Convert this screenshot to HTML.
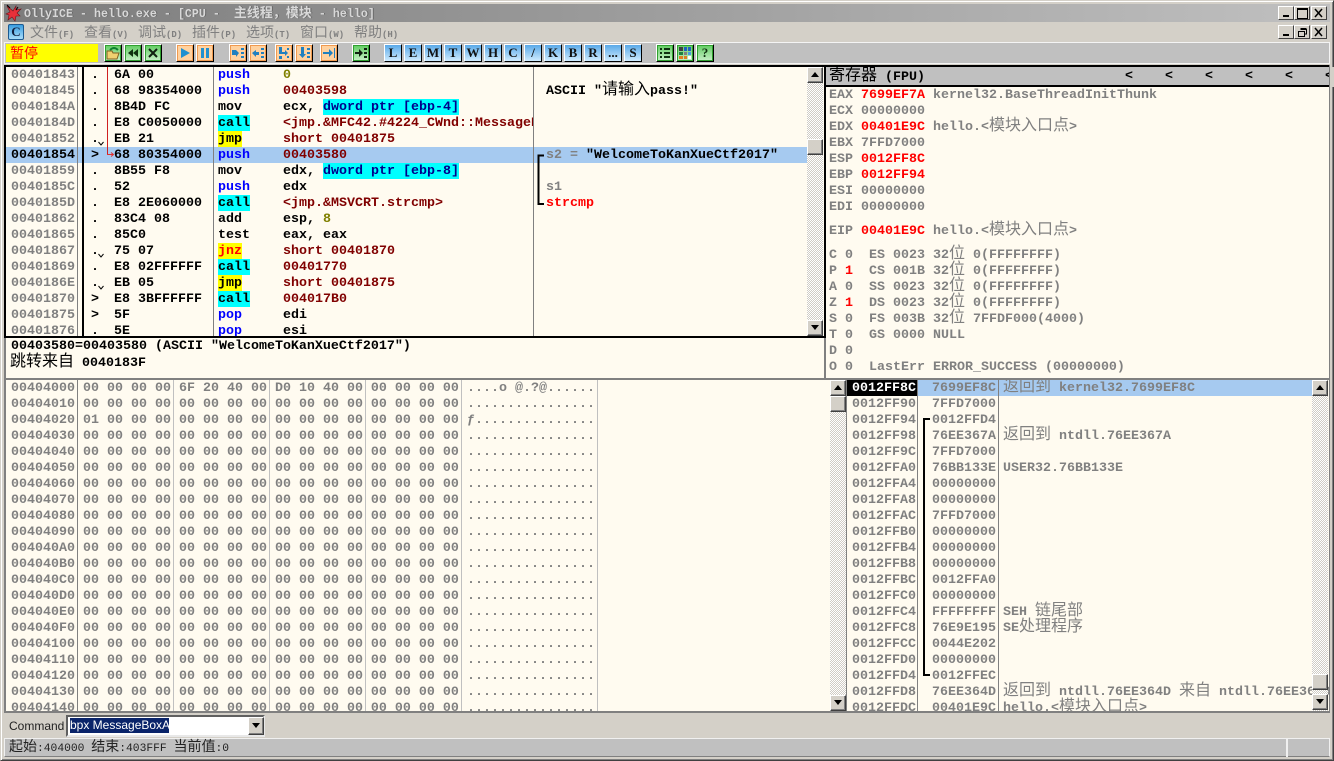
<!DOCTYPE html>
<html><head><meta charset="utf-8"><style>
html,body{margin:0;padding:0;width:1334px;height:761px;overflow:hidden;background:#d4d0c8}
div,pre,svg{position:absolute;margin:0}
pre{font:700 13.33px/16px "Liberation Mono",monospace;color:#808080;white-space:pre}
.c{font:400 16px/0 "Noto Sans CJK SC",sans-serif}
.k{color:#000}.b{color:#00f}.m{color:#800000}.o{color:#808000}.r{color:#f00}
.cy{background:#0ff;display:inline-block;height:15px;box-shadow:0 -1px 0 #0ff}.ye{background:#ff0;display:inline-block;height:15px;box-shadow:0 -1px 0 #ff0}
.p{background:#fffbf0;overflow:hidden}
.sb{width:16px;height:16px;background:#d4d0c8;box-sizing:border-box;border:1px solid;border-color:#fff #404040 #404040 #fff;box-shadow:inset -1px -1px #808080}
.tr{width:16px;background-color:#f2efe8;background-image:conic-gradient(#d0ccc4 25%,#fff 0 50%,#d0ccc4 0 75%,#fff 0);background-size:2px 2px}
.v{width:1px}
.w{width:16px;height:14px;background:#d4d0c8;box-sizing:border-box;border:1px solid;border-color:#fff #404040 #404040 #fff;color:#000}
.tb{top:44px;width:18px;height:18px;box-sizing:border-box;border:1px solid;border-color:#fff #000 #000 #fff;font:700 13px/16px "Liberation Serif",serif;text-align:center;color:#111;overflow:hidden}
.bl{background:linear-gradient(#5aa9e8,#d0ecff)}
.or{background:#ffd2a0;box-shadow:inset 0 0 0 1px #f09a50}
.gr{background:linear-gradient(#60cc60,#c8f0c8);box-shadow:inset 0 0 0 1px #30a030}
.tb svg{left:0;top:0}
.mn{top:22px;font:400 14px/20px "Noto Sans CJK SC",sans-serif;color:#808080;white-space:pre}
.mn span{font:700 9px "Liberation Mono",monospace}
</style></head><body>

<div style="left:0;top:0;width:1334px;height:761px;box-sizing:border-box;border:1px solid;border-color:#d4d0c8 #404040 #404040 #d4d0c8;box-shadow:inset 1px 1px #fff,inset -1px -1px #808080"></div>

<!-- title bar -->
<div style="left:4px;top:4px;width:1326px;height:18px;background:linear-gradient(90deg,#7c7c7c,#c0c0c0)"></div>
<svg style="left:5px;top:4px" width="18" height="18" viewBox="0 0 18 18"><path d="M2 2L8 7L11 2L11 6L16 5L12 9L15 12L11 12L10 17L7 13L3 16L4 11L1 10L5 8Z" fill="#e8303a" stroke="#701018" stroke-width=".6"/><path d="M2 1L5 4M13 3L11 6" stroke="#000"/></svg>
<pre style="left:24px;top:6px;color:#d8d8d8;font-size:11.67px;text-shadow:1px 0 #666">OllyICE - hello.exe - [CPU -  <span class="c" style="font-weight:700;font-size:13px">主线程，模块</span> - hello]</pre>
<div class="w" style="left:1278px;top:6px"><div style="left:4px;top:8px;width:6px;height:2px;background:#000"></div></div>
<div class="w" style="left:1294px;top:6px"><div style="left:2px;top:1px;width:9px;height:8px;border:1px solid #000;border-top-width:2px;box-sizing:content-box"></div></div>
<div class="w" style="left:1311px;top:6px"><svg style="left:2px;top:1px" width="10" height="10"><path d="M1 1L8 9M8 1L1 9" stroke="#000" stroke-width="1.5"/></svg></div>

<!-- menu -->
<div style="left:8px;top:24px;width:16px;height:16px;background:linear-gradient(#3a9ee0,#a8dcfa);border:1px solid #1c5a90;box-sizing:border-box;border-radius:2px;font:700 13px/14px 'Liberation Serif',serif;color:#102040;text-align:center">C</div>
<div class="mn" style="left:30px">文件<span>(F)</span></div>
<div class="mn" style="left:84px">查看<span>(V)</span></div>
<div class="mn" style="left:138px">调试<span>(D)</span></div>
<div class="mn" style="left:192px">插件<span>(P)</span></div>
<div class="mn" style="left:246px">选项<span>(T)</span></div>
<div class="mn" style="left:300px">窗口<span>(W)</span></div>
<div class="mn" style="left:354px">帮助<span>(H)</span></div>
<div class="w" style="left:1278px;top:25px"><div style="left:4px;top:8px;width:6px;height:2px;background:#000"></div></div>
<div class="w" style="left:1294px;top:25px"><svg style="left:2px;top:1px" width="11" height="10"><path d="M3.5 2.5H9.5V7H7.5M1.5 4.5H7.5V9.5H1.5ZM3.5 1.5H9.5" fill="none" stroke="#000"/></svg></div>
<div class="w" style="left:1311px;top:25px"><svg style="left:2px;top:1px" width="10" height="10"><path d="M1 1L8 9M8 1L1 9" stroke="#000" stroke-width="1.5"/></svg></div>

<!-- toolbar -->
<div style="left:4px;top:42px;width:1326px;height:22px;box-sizing:border-box;background:#c0c0c0;border:1px solid;border-color:#f4f4f4"></div>
<div style="left:6px;top:44px;width:92px;height:18px;background:#ff0;color:#f00;font:400 14px/18px 'Noto Sans CJK SC',sans-serif;padding-left:4px;box-sizing:border-box">暂停</div>

<div class="tb gr" style="left:104px"><svg width="16" height="16"><path d="M2 6H7L8 8H14L12 14H2Z" fill="#f0d070" stroke="#806020"/><path d="M5 5Q9 1 13 5" fill="none" stroke="#108030" stroke-width="2"/></svg></div>
<div class="tb gr" style="left:124px"><svg width="16" height="16"><path d="M8 4V12L3 8ZM13 4V12L8 8Z" fill="#103010"/></svg></div>
<div class="tb gr" style="left:144px"><svg width="16" height="16"><path d="M4 4L12 12M12 4L4 12" stroke="#102010" stroke-width="2"/></svg></div>
<div class="tb or" style="left:176px"><svg width="16" height="16"><path d="M4 3L13 8L4 13Z" fill="#2090d0"/></svg></div>
<div class="tb or" style="left:196px"><svg width="16" height="16"><path d="M4 3H7V13H4ZM9 3H12V13H9Z" fill="#2090d0"/></svg></div>
<div class="tb or" style="left:229px"><svg width="16" height="16"><path d="M2 5H6L9 8L6 12V10H2Z" fill="#2080c0"/><path d="M11 3H14V5H11ZM11 7H14V9H11ZM11 11H14V13H11Z" fill="#2080c0"/></svg></div>
<div class="tb or" style="left:249px"><svg width="16" height="16"><path d="M2 8L6 5V7H9V10H6V12Z" fill="#2080c0"/><path d="M11 3H14V5H11ZM11 7H14V9H11ZM11 11H14V13H11Z" fill="#2080c0"/></svg></div>
<div class="tb or" style="left:275px"><svg width="16" height="16"><path d="M3 2H6V7L9 7V5L12 8L9 11V9H3Z" fill="#2080c0"/><path d="M3 11H6V14H3ZM11 3H13V5H11ZM11 11H13V13H11Z" fill="#2080c0"/></svg></div>
<div class="tb or" style="left:295px"><svg width="16" height="16"><path d="M5 2H8V9H10L6.500 13L3 9H5Z" fill="#2080c0"/><path d="M11 3H14V5H11ZM11 7H14V9H11ZM11 11H14V13H11Z" fill="#2080c0"/></svg></div>
<div class="tb or" style="left:320px"><svg width="16" height="16"><path d="M2 7H8V4L12 8L8 12V9H2ZM13 3H14V13H13Z" fill="#2080c0"/></svg></div>
<div class="tb gr" style="left:352px"><svg width="16" height="16"><path d="M2 7H6V4L10 8L6 12V9H2Z" fill="#102010"/><path d="M11 3H14V5H11ZM11 7H14V9H11ZM11 11H14V13H11Z" fill="#102010"/></svg></div>

<div class="tb bl" style="left:384px">L</div><div class="tb bl" style="left:404px">E</div><div class="tb bl" style="left:424px">M</div><div class="tb bl" style="left:444px">T</div><div class="tb bl" style="left:464px">W</div><div class="tb bl" style="left:484px">H</div><div class="tb bl" style="left:504px">C</div><div class="tb bl" style="left:524px">/</div><div class="tb bl" style="left:544px">K</div><div class="tb bl" style="left:564px">B</div><div class="tb bl" style="left:584px">R</div><div class="tb bl" style="left:604px">...</div><div class="tb bl" style="left:624px">S</div>
<div class="tb gr" style="left:656px"><svg width="16" height="16"><path d="M3 3H5V5H3ZM7 3H13V5H7ZM3 7H5V9H3ZM7 7H13V9H7ZM3 11H5V13H3ZM7 11H13V13H7Z" fill="#103010"/></svg></div>
<div class="tb gr" style="left:676px"><svg width="16" height="16"><path d="M2 2H6V6H2Z" fill="#404040"/><path d="M7 2H10V6H7Z" fill="#2060c0"/><path d="M11 2H14V6H11Z" fill="#2060c0"/><path d="M2 7H6V10H2Z" fill="#208040"/><path d="M7 7H10V10H7Z" fill="#808080"/><path d="M11 7H14V10H11Z" fill="#40a0e0"/><path d="M2 11H6V14H2Z" fill="#e08020"/><path d="M7 11H10V14H7Z" fill="#e08020"/><path d="M11 11H14V14H11Z" fill="#fff"/></svg></div>
<div class="tb gr" style="left:696px;color:#103010">?</div>

<!-- black frame -->
<div style="left:4px;top:65px;width:1326px;height:2px;background:#000"></div>

<!-- disassembly pane -->
<div class="p" style="left:4px;top:67px;width:820px;height:269px;border-left:2px solid #000;box-sizing:border-box">
<div style="left:0;top:80px;width:801px;height:16px;background:#a6caf0"></div>
<div class="v" style="left:71px;top:0;height:269px;background:#808080"></div>
<div style="left:76px;top:0;width:2px;height:269px;background:#000"></div>
<div class="v" style="left:207px;top:0;height:269px;background:#808080"></div>
<div class="v" style="left:527px;top:0;height:269px;background:#808080"></div>
<div class="v" style="left:101px;top:0;height:88px;background:#d02020"></div>
<svg style="left:101px;top:84px" width="8" height="8"><path d="M0 3.500H6M4 1.500L6.500 3.500L4 5.500" fill="none" stroke="#e03030"/></svg>
<pre style="left:5px;top:1px">00401843
00401845
0040184A
0040184D
00401852
<span class="k">00401854</span>
00401859
0040185C
0040185D
00401862
00401865
00401867
00401869
0040186E
00401870
00401875
00401876</pre>
<pre style="left:85px;top:1px;color:#000">.
.
.
.
.
&gt;
.
.
.
.
.
.
.
.
&gt;
&gt;
.</pre>
<svg style="left:92px;top:0" width="8" height="230"><path d="M0.500 75L3 78L5.500 75M0.500 187L3 190L5.500 187M0.500 219L3 222L5.500 219" fill="none" stroke="#000"/></svg>
<pre style="left:108px;top:1px;color:#000">6A 00
68 98354000
8B4D FC
E8 C0050000
EB 21
68 80354000
8B55 F8
52
E8 2E060000
83C4 08
85C0
75 07
E8 02FFFFFF
EB 05
E8 3BFFFFFF
5F
5E</pre>
<pre style="left:212px;top:1px;color:#000"><span class="b">push</span>
<span class="b">push</span>
mov
<span class="cy">call</span>
<span class="ye">jmp</span>
<span class="b">push</span>
mov
<span class="b">push</span>
<span class="cy">call</span>
add
test
<span class="ye r">jnz</span>
<span class="cy">call</span>
<span class="ye">jmp</span>
<span class="cy">call</span>
<span class="b">pop</span>
<span class="b">pop</span></pre>
<div style="left:277px;top:0;width:250px;height:269px;overflow:hidden"><pre style="left:0;top:1px;color:#000"><span class="o">0</span>
<span class="m">00403598</span>
ecx, <span class="cy" style="color:#00008b">dword ptr [ebp-4]</span>
<span class="m">&lt;jmp.&amp;MFC42.#4224_CWnd::MessageBox&gt;</span>
<span class="m">short 00401875</span>
<span class="m">00403580</span>
edx, <span class="cy" style="color:#00008b">dword ptr [ebp-8]</span>
edx
<span class="m">&lt;jmp.&amp;MSVCRT.strcmp&gt;</span>
esp, <span class="o">8</span>
eax, eax
<span class="m">short 00401870</span>
<span class="m">00401770</span>
<span class="m">short 00401875</span>
<span class="m">004017B0</span>
edi
esi</pre></div>
<pre style="left:540px;top:17px;color:#000">ASCII "<span class="c">请输入</span>pass!"</pre>
<svg style="left:531px;top:80px" width="10" height="62"><path d="M7 8.500H1.500V57H7" fill="none" stroke="#000" stroke-width="2"/></svg>
<pre style="left:540px;top:81px">s2 = <span class="k">"WelcomeToKanXueCtf2017"</span>
 
s1
<span class="r">strcmp</span></pre>
</div>
<!-- disasm scroll -->
<div class="tr" style="left:807px;top:67px;height:269px"></div>
<div class="sb" style="left:807px;top:67px"><svg style="left:3px;top:4px" width="9" height="6"><path d="M4 0L8 5H0Z" fill="#000"/></svg></div>
<div class="sb" style="left:807px;top:139px"></div>
<div class="sb" style="left:807px;top:320px"><svg style="left:3px;top:4px" width="9" height="6"><path d="M0 0H8L4 5Z" fill="#000"/></svg></div>
<div style="left:4px;top:336px;width:820px;height:2px;background:#000"></div>

<!-- info pane -->
<div class="p" style="left:4px;top:338px;width:820px;height:40px;border-left:2px solid #808080;box-sizing:border-box">
<pre style="left:5px;top:1px;color:#000">00403580=00403580 (ASCII "WelcomeToKanXueCtf2017")</pre>
<pre style="left:5px;top:18px;color:#000"><span class="c" style="margin-left:-1px">跳转来自</span> 0040183F</pre>
</div>

<!-- registers -->
<div style="left:824px;top:67px;width:2px;height:271px;background:#000"></div>
<div style="left:824px;top:338px;width:2px;height:40px;background:#808080"></div>
<div style="left:826px;top:67px;width:503px;height:20px;background:#c0c0c0;border-bottom:2px solid #000;box-sizing:border-box"></div>
<pre style="left:829px;top:70px;color:#000"><span class="c">寄存器</span> (FPU)</pre>
<pre style="left:1125px;top:69px;color:#000">&lt;    &lt;    &lt;    &lt;    &lt;    &lt;</pre>
<div style="left:1329px;top:67px;width:5px;height:20px;background:#d4d0c8"></div>
<div class="p" style="left:826px;top:87px;width:503px;height:291px">
<pre style="left:3px;top:1px">EAX <span class="r">7699EF7A</span> kernel32.BaseThreadInitThunk
ECX 00000000
EDX <span class="r">00401E9C</span> hello.&lt;<span class="c">模块入口点</span>&gt;
EBX 7FFD7000
ESP <span class="r">0012FF8C</span>
EBP <span class="r">0012FF94</span>
ESI 00000000
EDI 00000000</pre>
<pre style="left:3px;top:137px">EIP <span class="r">00401E9C</span> hello.&lt;<span class="c">模块入口点</span>&gt;</pre>
<pre style="left:3px;top:161px">C 0  ES 0023 32<span class="c">位</span> 0(FFFFFFFF)
P <span class="r">1</span>  CS 001B 32<span class="c">位</span> 0(FFFFFFFF)
A 0  SS 0023 32<span class="c">位</span> 0(FFFFFFFF)
Z <span class="r">1</span>  DS 0023 32<span class="c">位</span> 0(FFFFFFFF)
S 0  FS 003B 32<span class="c">位</span> 7FFDF000(4000)
T 0  GS 0000 NULL
D 0
O 0  LastErr ERROR_SUCCESS (00000000)</pre>
</div>
<div style="left:1329px;top:65px;width:1px;height:646px;background:#808080"></div>

<!-- divider -->
<div style="left:4px;top:378px;width:1326px;height:2px;background:#808080"></div>
<div style="left:4px;top:380px;width:2px;height:332px;background:#808080"></div>

<!-- dump -->
<div class="p" style="left:6px;top:380px;width:824px;height:331px">
<div class="v" style="left:71px;top:0;height:331px;background:#808080"></div>
<div class="v" style="left:167px;top:0;height:331px;background:#c0c0c0"></div>
<div class="v" style="left:263px;top:0;height:331px;background:#c0c0c0"></div>
<div class="v" style="left:359px;top:0;height:331px;background:#c0c0c0"></div>
<div class="v" style="left:455px;top:0;height:331px;background:#c0c0c0"></div>
<div class="v" style="left:591px;top:0;height:331px;background:#c0c0c0"></div>
<pre style="left:5px;top:1px">00404000
00404010
00404020
00404030
00404040
00404050
00404060
00404070
00404080
00404090
004040A0
004040B0
004040C0
004040D0
004040E0
004040F0
00404100
00404110
00404120
00404130
00404140</pre>
<pre style="left:77px;top:1px">00 00 00 00 6F 20 40 00 D0 10 40 00 00 00 00 00
00 00 00 00 00 00 00 00 00 00 00 00 00 00 00 00
01 00 00 00 00 00 00 00 00 00 00 00 00 00 00 00
00 00 00 00 00 00 00 00 00 00 00 00 00 00 00 00
00 00 00 00 00 00 00 00 00 00 00 00 00 00 00 00
00 00 00 00 00 00 00 00 00 00 00 00 00 00 00 00
00 00 00 00 00 00 00 00 00 00 00 00 00 00 00 00
00 00 00 00 00 00 00 00 00 00 00 00 00 00 00 00
00 00 00 00 00 00 00 00 00 00 00 00 00 00 00 00
00 00 00 00 00 00 00 00 00 00 00 00 00 00 00 00
00 00 00 00 00 00 00 00 00 00 00 00 00 00 00 00
00 00 00 00 00 00 00 00 00 00 00 00 00 00 00 00
00 00 00 00 00 00 00 00 00 00 00 00 00 00 00 00
00 00 00 00 00 00 00 00 00 00 00 00 00 00 00 00
00 00 00 00 00 00 00 00 00 00 00 00 00 00 00 00
00 00 00 00 00 00 00 00 00 00 00 00 00 00 00 00
00 00 00 00 00 00 00 00 00 00 00 00 00 00 00 00
00 00 00 00 00 00 00 00 00 00 00 00 00 00 00 00
00 00 00 00 00 00 00 00 00 00 00 00 00 00 00 00
00 00 00 00 00 00 00 00 00 00 00 00 00 00 00 00
00 00 00 00 00 00 00 00 00 00 00 00 00 00 00 00</pre>
<pre style="left:461px;top:1px">....o @.?@......
................
ƒ...............
................
................
................
................
................
................
................
................
................
................
................
................
................
................
................
................
................
................</pre>
</div>
<div class="tr" style="left:830px;top:380px;height:331px"></div>
<div class="sb" style="left:830px;top:380px"><svg style="left:3px;top:4px" width="9" height="6"><path d="M4 0L8 5H0Z" fill="#000"/></svg></div>
<div class="sb" style="left:830px;top:396px"></div>
<div class="sb" style="left:830px;top:695px"><svg style="left:3px;top:4px" width="9" height="6"><path d="M0 0H8L4 5Z" fill="#000"/></svg></div>
<div style="left:846px;top:380px;width:1px;height:331px;background:#808080"></div>

<!-- stack -->
<div class="p" style="left:847px;top:380px;width:482px;height:331px">
<div style="left:70px;top:0;width:395px;height:16px;background:#a6caf0"></div>
<div style="left:0;top:0;width:70px;height:16px;background:#000"></div>
<div class="v" style="left:70px;top:0;height:331px;background:#808080"></div>
<div class="v" style="left:151px;top:0;height:331px;background:#808080"></div>
<svg style="left:75px;top:30px" width="10" height="270"><path d="M8 9H2V265H8" fill="none" stroke="#000" stroke-width="2"/></svg>
<pre style="left:5px;top:1px"><span style="color:#fff">0012FF8C</span>
0012FF90
0012FF94
0012FF98
0012FF9C
0012FFA0
0012FFA4
0012FFA8
0012FFAC
0012FFB0
0012FFB4
0012FFB8
0012FFBC
0012FFC0
0012FFC4
0012FFC8
0012FFCC
0012FFD0
0012FFD4
0012FFD8
0012FFDC</pre>
<pre style="left:85px;top:1px">7699EF8C
7FFD7000
0012FFD4
76EE367A
7FFD7000
76BB133E
00000000
00000000
7FFD7000
00000000
00000000
00000000
0012FFA0
00000000
FFFFFFFF
76E9E195
0044E202
00000000
0012FFEC
76EE364D
00401E9C</pre>
<pre style="left:156px;top:1px"><span class="c">返回到</span> kernel32.7699EF8C


<span class="c">返回到</span> ntdll.76EE367A

USER32.76BB133E








SEH <span class="c">链尾部</span>
SE<span class="c">处理程序</span>



<span class="c">返回到</span> ntdll.76EE364D <span class="c">来自</span> ntdll.76EE3649
hello.&lt;<span class="c">模块入口点</span>&gt;</pre>
</div>
<div class="tr" style="left:1312px;top:380px;height:331px"></div>
<div class="sb" style="left:1312px;top:380px"><svg style="left:3px;top:4px" width="9" height="6"><path d="M4 0L8 5H0Z" fill="#000"/></svg></div>
<div class="sb" style="left:1312px;top:674px"></div>
<div class="sb" style="left:1312px;top:694px"><svg style="left:3px;top:4px" width="9" height="6"><path d="M0 0H8L4 5Z" fill="#000"/></svg></div>

<div style="left:4px;top:711px;width:1326px;height:2px;background:#808080"></div>

<!-- command -->
<div style="left:9px;top:718px;font:12px/16px 'Liberation Sans',sans-serif;color:#222">Command</div>
<div style="left:66px;top:715px;width:199px;height:22px;background:#fff;box-sizing:border-box;border:2px solid;border-color:#606060 #e8e8e8 #e8e8e8 #606060"></div>
<div style="left:70px;top:718px;width:99px;height:15px;background:#0a246a;color:#fff;font:12px/15px 'Liberation Sans',sans-serif;white-space:pre;overflow:hidden">bpx MessageBoxA</div>
<div class="sb" style="left:248px;top:717px;height:18px"><svg style="left:3px;top:5px" width="9" height="6"><path d="M0 0H8L4 5Z" fill="#000"/></svg></div>

<!-- status -->
<div style="left:4px;top:738px;width:1326px;height:19px;box-sizing:border-box;background:#c0c0c0;border:1px solid;border-color:#f0f0f0 #f0f0f0 #808080 #f0f0f0"></div>
<div style="left:1286px;top:738px;width:2px;height:19px;background:#f0f0f0"></div>
<pre style="left:9px;top:741px;color:#222;font:400 11.3px/16px 'Liberation Mono',monospace"><span class="c" style="font-size:14px">起始</span>:404000 <span class="c" style="font-size:14px">结束</span>:403FFF <span class="c" style="font-size:14px">当前值</span>:0</pre>
</body></html>
